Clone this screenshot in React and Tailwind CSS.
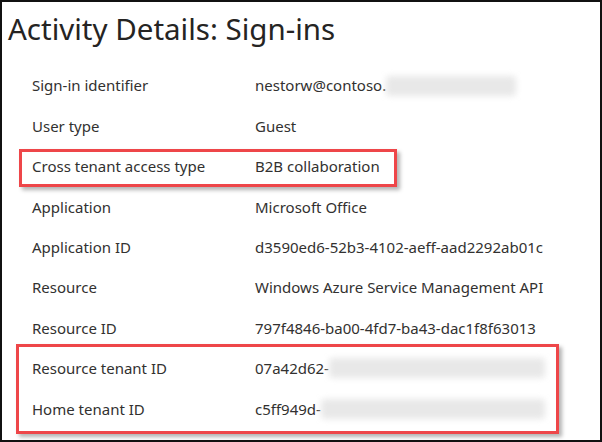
const rows = [
  { label: "Sign-in identifier", value: "nestorw@contoso.", blur: "w-[130px]" },
  { label: "User type", value: "Guest" },
  { label: "Cross tenant access type", value: "B2B collaboration" },
  { label: "Application", value: "Microsoft Office" },
  { label: "Application ID", value: "d3590ed6-52b3-4102-aeff-aad2292ab01c" },
  { label: "Resource", value: "Windows Azure Service Management API" },
  { label: "Resource ID", value: "797f4846-ba00-4fd7-ba43-dac1f8f63013" },
  { label: "Resource tenant ID", value: "07a42d62-", blur: "w-[216px]" },
  { label: "Home tenant ID", value: "c5ff949d-", blur: "w-[224px]" },
]

function Row({ label, value, blur }) {
  return (
    <div className="flex items-center h-[40.4px]">
      <div className="w-[253px] shrink-0 pl-[30px]">{label}</div>
      <div className="flex items-center">
        <span>{value}</span>
        {blur && <span className={`${blur} h-[20px] bg-[#e8e8e8] blur-[3px] rounded-sm`} />}
      </div>
    </div>
  )
}

export default function App() {
  return (
    <div className="w-[602px] h-[442px] bg-white border-2 border-[#111] relative overflow-hidden text-[#323130] text-[15px]" style={{ fontFamily: '"Noto Sans", "Open Sans", sans-serif' }}>
      <h1 className="text-[29.5px] leading-none text-[#252423] pl-[6px] pt-[12px] pb-[22px]">Activity Details: Sign-ins</h1>
      <div className="flex flex-col">
        {rows.map((r) => (
          <Row key={r.label} {...r} />
        ))}
      </div>

      {/* highlight boxes */}
      <div className="absolute left-[17px] top-[147px] w-[378px] h-[38px] border-[3px] border-[#ee4649] shadow-[3px_3px_4px_rgba(0,0,0,0.3)]" />
      <div className="absolute left-[14px] top-[342px] w-[543px] h-[90px] border-[3px] border-[#ee4649] shadow-[3px_3px_4px_rgba(0,0,0,0.3)]" />
    </div>
  )
}
